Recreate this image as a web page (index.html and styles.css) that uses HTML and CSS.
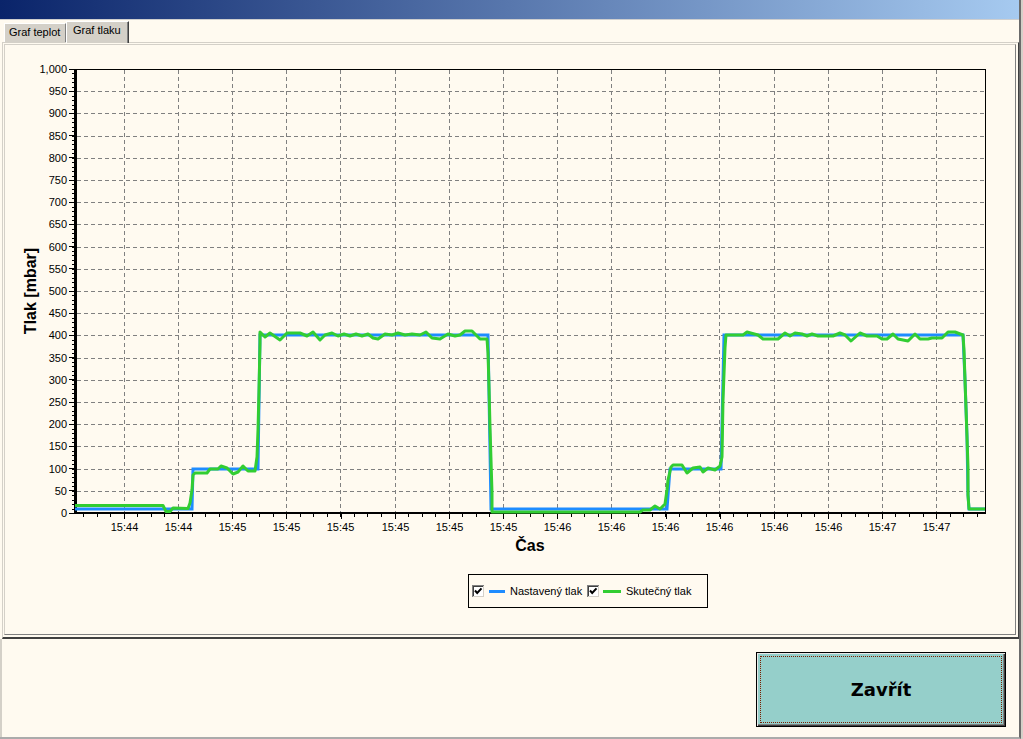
FILE: index.html
```html
<!DOCTYPE html>
<html>
<head>
<meta charset="utf-8">
<title>Graf tlaku</title>
<link rel="stylesheet" href="styles.css">
</head>
<body>
<div class="window">
  <div class="titlebar"></div>
  <div class="tabs">
    <div class="tab">Graf teplot</div>
    <div class="tab active">Graf tlaku</div>
  </div>
  <div class="page">
    <div class="chartbox">
      <svg class="chart" width="1010" height="589" viewBox="5 45 1010 589" xmlns="http://www.w3.org/2000/svg">
        <defs>
          <clipPath id="plot"><rect x="75" y="66" width="910" height="450"/></clipPath>
        </defs>
        <!-- grid -->
        <g class="grid">
          <path d="M77 91.5H985M77 113.5H985M77 136.5H985M77 158.5H985M77 180.5H985M77 202.5H985M77 224.5H985M77 247.5H985M77 269.5H985M77 291.5H985M77 313.5H985M77 335.5H985M77 358.5H985M77 380.5H985M77 402.5H985M77 424.5H985M77 446.5H985M77 469.5H985M77 491.5H985"/>
          <path d="M124.5 70V512M178.5 70V512M232.5 70V512M286.5 70V512M340.5 70V512M395.5 70V512M449.5 70V512M503.5 70V512M557.5 70V512M611.5 70V512M665.5 70V512M719.5 70V512M774.5 70V512M828.5 70V512M882.5 70V512M936.5 70V512"/>
        </g>
        <!-- frame and axes -->
        <path class="frame" d="M75 69.5H985.5V514"/>
        <rect x="74" y="69" width="3" height="445" fill="#000"/>
        <rect x="74" y="512" width="912" height="2" fill="#000"/>
        <!-- ticks -->
        <line class="tick" x1="73" y1="69" x2="73" y2="513" stroke-width="2" stroke-dasharray="1 3.44"/>
        <line class="tick" x1="71.5" y1="68.5" x2="71.5" y2="514" stroke-width="5" stroke-dasharray="1 21.2"/>
        <line class="tick" x1="83.2" y1="515" x2="986" y2="515" stroke-width="3" stroke-dasharray="1 12.5375"/>
        <line class="tick" x1="124" y1="516" x2="986" y2="516" stroke-width="5" stroke-dasharray="1 53.15"/>
        <!-- y labels -->
        <g class="ax ylab">
          <text x="67" y="73">1,000</text>
          <text x="67" y="95">950</text>
          <text x="67" y="117">900</text>
          <text x="67" y="140">850</text>
          <text x="67" y="162">800</text>
          <text x="67" y="184">750</text>
          <text x="67" y="206">700</text>
          <text x="67" y="228">650</text>
          <text x="67" y="251">600</text>
          <text x="67" y="273">550</text>
          <text x="67" y="295">500</text>
          <text x="67" y="317">450</text>
          <text x="67" y="339">400</text>
          <text x="67" y="362">350</text>
          <text x="67" y="384">300</text>
          <text x="67" y="406">250</text>
          <text x="67" y="428">200</text>
          <text x="67" y="450">150</text>
          <text x="67" y="473">100</text>
          <text x="67" y="495">50</text>
          <text x="67" y="517">0</text>
        </g>
        <!-- x labels -->
        <g class="ax xlab">
          <text x="124.5" y="531">15:44</text>
          <text x="178.5" y="531">15:44</text>
          <text x="232.5" y="531">15:45</text>
          <text x="286.5" y="531">15:45</text>
          <text x="340.5" y="531">15:45</text>
          <text x="395.5" y="531">15:45</text>
          <text x="449.5" y="531">15:45</text>
          <text x="503.5" y="531">15:45</text>
          <text x="557.5" y="531">15:46</text>
          <text x="611.5" y="531">15:46</text>
          <text x="665.5" y="531">15:46</text>
          <text x="719.5" y="531">15:46</text>
          <text x="774.5" y="531">15:46</text>
          <text x="828.5" y="531">15:46</text>
          <text x="882.5" y="531">15:47</text>
          <text x="936.5" y="531">15:47</text>
        </g>
        <!-- axis titles -->
        <text class="ttl" x="530" y="551" text-anchor="middle">Čas</text>
        <text class="ttl" transform="translate(36 291) rotate(-90)" text-anchor="middle">Tlak [mbar]</text>
        <!-- series -->
        <g clip-path="url(#plot)">
          <polyline class="s-blue" points="75,509 192,509 193,469 258,469 260,335 488,335 491,509 667,509 670,469 721,469 724,335 963,335 965,380 967,437 968,495 969,509 990,509"/>
          <polyline class="s-green" points="75,505.5 163,505.5 166,511.5 170,511.5 173,508 188,508.5 190,503 192,490 193,475 195,473 207,473 210,469 218,469 221,466 227,468 233,474 238,472 243,466 248,471 255,471 257,457 258,430 259,390 260,343 260,332 265,337 270,333 280,340 287,333 300,333 307,336 313,332 320,340 325,335 332,333 338,336 344,334 350,336 356,334 362,336 368,334 373,338 378,339 385,334 392,335 398,333 405,335 412,334 420,335 426,332 432,338 440,339 448,334 455,336 460,335 465,331 472,331 480,339 487,339 488,353 489,387 490,427 491,460 492,493 492,512 640,512 643,510 650,510 655,506 660,509 665,504 667,490 668,480 671,467 673,465 682,465 687,473 693,468 700,467 703,472 708,468 715,470 720,466 722,457 723,400 725,348 726,335 743,335 747,332 758,335 763,339 778,339 785,333 790,336 795,333 802,334 807,336 812,334 818,336 833,336 840,333 845,335 851,341 860,333 867,336 877,336 882,339 887,339 893,334 898,339 908,341 915,334 920,339 928,339 932,338 942,338 948,332 955,332 963,335 964,350 965,380 966,408 967,437 968,467 968,495 969,509 990,509"/>
        </g>
        <!-- legend -->
        <rect class="legend" x="468.5" y="574.5" width="239" height="33"/>
        <g class="cb">
          <rect x="472" y="585" width="12" height="12" fill="#fff"/>
          <path d="M472.5 597V585.5H484" stroke="#808080"/>
          <path d="M473.5 596V586.5H483" stroke="#404040"/>
          <path d="M483.5 586V596.5H473" stroke="#d4d0c8"/>
          <polyline points="475,590.5 477.2,593 481.5,588.3" stroke="#000" stroke-width="2"/>
        </g>
        <line x1="489" y1="591.5" x2="505" y2="591.5" stroke="#1e8cff" stroke-width="3"/>
        <text class="ax" x="510" y="595">Nastavený tlak</text>
        <g class="cb">
          <rect x="587" y="585" width="12" height="12" fill="#fff"/>
          <path d="M587.5 597V585.5H599" stroke="#808080"/>
          <path d="M588.5 596V586.5H598" stroke="#404040"/>
          <path d="M598.5 586V596.5H588" stroke="#d4d0c8"/>
          <polyline points="590,590.5 592.2,593 596.5,588.3" stroke="#000" stroke-width="2"/>
        </g>
        <line x1="603" y1="591.5" x2="621" y2="591.5" stroke="#32cd32" stroke-width="3"/>
        <text class="ax" x="626" y="595">Skutečný tlak</text>
      </svg>
    </div>
  </div>
  <div class="bottom">
    <button class="btn" type="button">Zavřít</button>
  </div>
</div>
</body>
</html>
```
FILE: styles.css
```css
* {
  box-sizing: border-box;
}

html,
body {
  margin: 0;
  padding: 0;
}

body {
  width: 1023px;
  height: 739px;
  overflow: hidden;
  background: #d4d0c8;
  font-family: "Liberation Sans", Arial, sans-serif;
  font-size: 11px;
  color: #000;
}

.window {
  width: 1021px;
  height: 739px;
  background: #fffaf0;
  border-right: 2px solid #6b6b6b;
  border-bottom: 2px solid #ababab;
  display: flex;
  flex-direction: column;
}

.titlebar {
  height: 20px;
  flex: none;
  background: linear-gradient(to right, #0a246a, #a6caf0);
  border-bottom: 1px solid #cfcfcf;
}

.tabs {
  height: 22px;
  flex: none;
  display: flex;
  align-items: flex-end;
  padding-left: 4px;
}

.tab {
  width: 62px;
  height: 19px;
  padding: 2px 0 0 4px;
  line-height: 13px;
  background: #d4d0c8;
  border-top: 1px solid #fff;
  border-left: 1px solid #fff;
  border-right: 1px solid #808080;
  white-space: nowrap;
}

.tab.active {
  width: 63px;
  height: 22px;
  margin-bottom: -1px;
  padding: 2px 0 0 6px;
  position: relative;
  z-index: 1;
  border-right: 1px solid #404040;
  box-shadow: inset -1px 0 #808080;
}

.page {
  height: 597px;
  flex: none;
  margin-left: 2px;
  border: 1px solid;
  border-color: #d4d0c8 #404040 #404040 #d4d0c8;
  border-bottom-width: 2px;
  padding: 1px 2px 2px 1px;
}

.chartbox {
  height: 591px;
  border: 1px solid;
  border-color: #d4d0c8 #808080 #808080 #d4d0c8;
}

.chart {
  display: block;
}

.grid path {
  fill: none;
  stroke: #808080;
  stroke-width: 1;
  stroke-dasharray: 4 3;
  shape-rendering: crispEdges;
}

.frame {
  fill: none;
  stroke: #000;
  stroke-width: 1;
  shape-rendering: crispEdges;
}

.tick {
  stroke: #000;
  shape-rendering: crispEdges;
}

.ax {
  font-family: "Liberation Sans", Arial, sans-serif;
  font-size: 11px;
  fill: #000;
}

.ylab text {
  text-anchor: end;
}

.xlab text {
  text-anchor: middle;
}

.ttl {
  font-family: "Liberation Sans", Arial, sans-serif;
  font-size: 16px;
  font-weight: bold;
  fill: #000;
}

.s-blue {
  fill: none;
  stroke: #1e8cff;
  stroke-width: 3;
  stroke-linejoin: miter;
}

.s-green {
  fill: none;
  stroke: #32cd32;
  stroke-width: 3;
  stroke-linejoin: round;
}

.legend {
  fill: #fffaf0;
  stroke: #000;
  stroke-width: 1;
}

.cb path,
.cb polyline {
  fill: none;
  shape-rendering: crispEdges;
}

.cb polyline {
  shape-rendering: auto;
}

.bottom {
  flex: 1;
  display: flex;
  justify-content: flex-end;
  align-items: flex-start;
  padding: 13px 13px 0 0;
  border-left: 2px solid #d4d0c8;
}

.btn {
  width: 250px;
  height: 75px;
  margin: 0;
  padding: 0;
  background: #95cfca;
  border: 1px solid #000;
  box-shadow: inset 1px 1px #e8e8e8, inset -1px -1px #404040, inset -2px -2px #808080;
  outline: 1px dotted #7a1f00;
  outline-offset: -5px;
  font-family: "DejaVu Sans", Verdana, sans-serif;
  font-size: 18px;
  font-weight: bold;
  color: #000;
  display: flex;
  align-items: center;
  justify-content: center;
}
```
